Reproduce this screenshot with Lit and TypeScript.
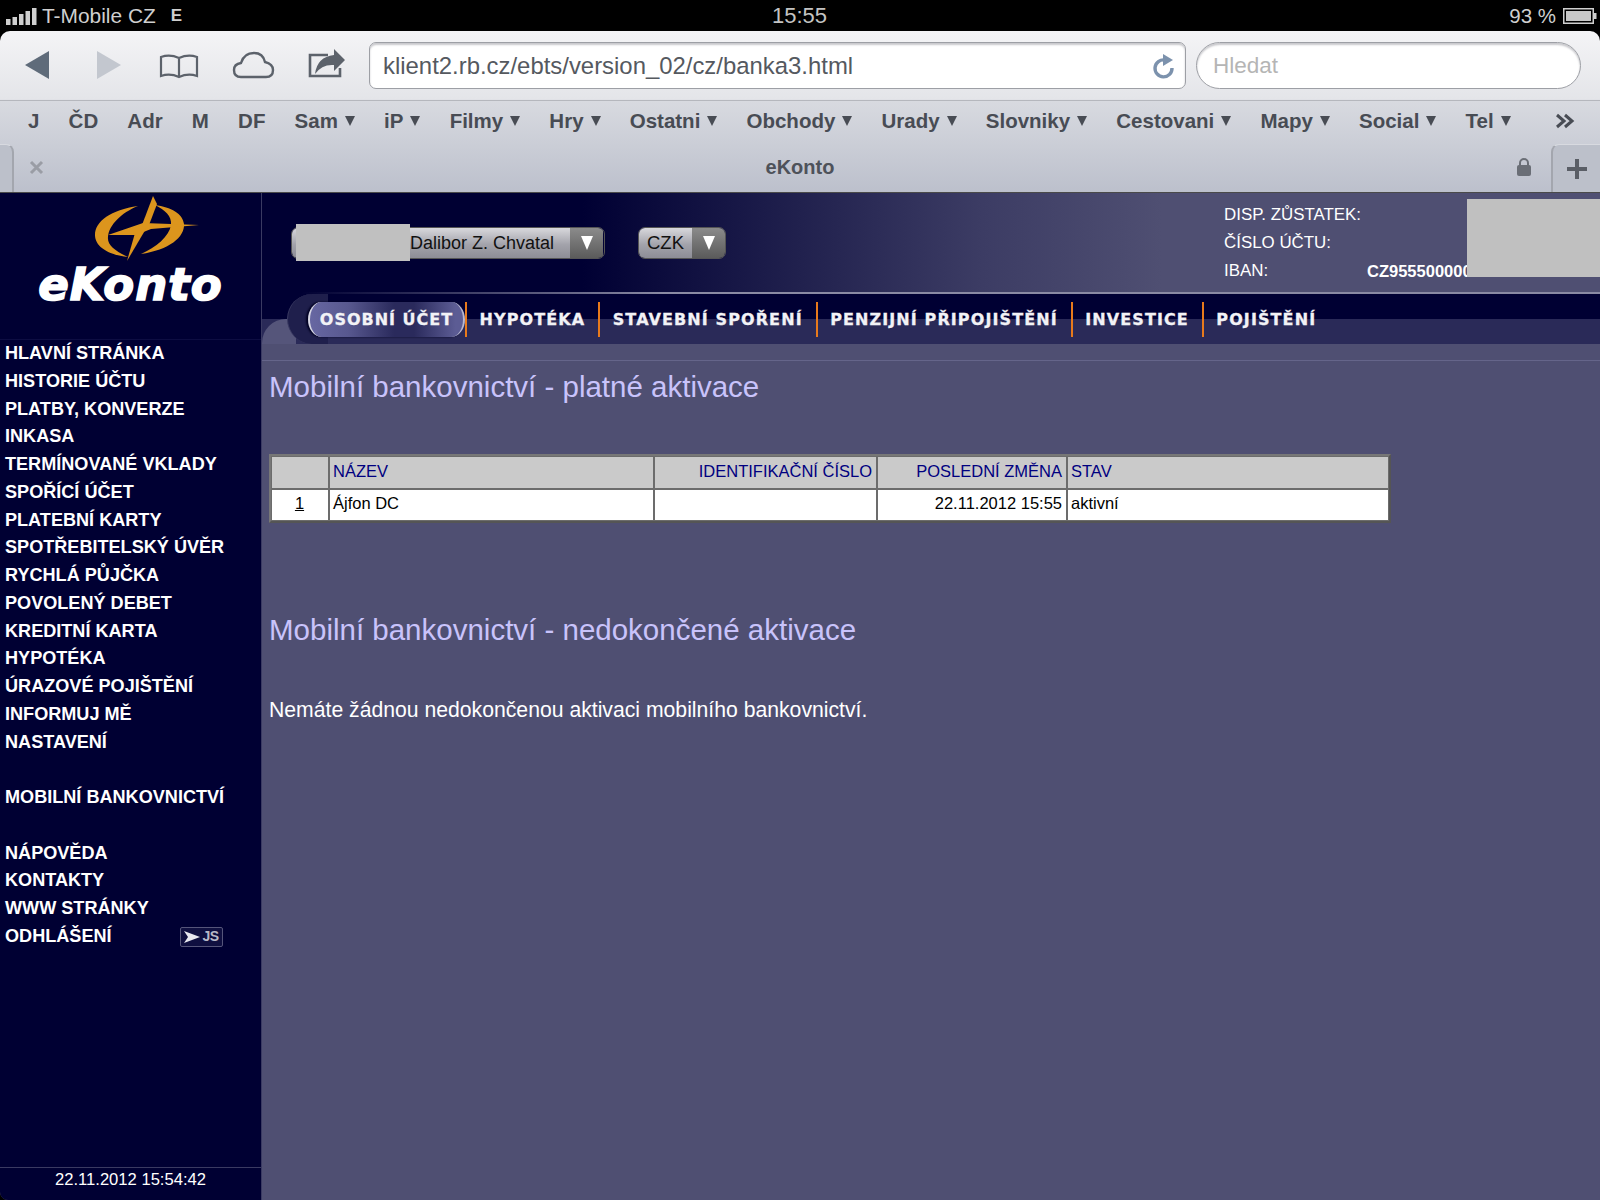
import { LitElement, html, css, svg } from 'lit';
import { customElement } from 'lit/decorators.js';

const bookmarks: [string, boolean][] = [
  ['J', false], ['ČD', false], ['Adr', false], ['M', false], ['DF', false],
  ['Sam', true], ['iP', true], ['Filmy', true], ['Hry', true], ['Ostatni', true],
  ['Obchody', true], ['Urady', true], ['Slovniky', true], ['Cestovani', true],
  ['Mapy', true], ['Social', true], ['Tel', true],
];

const menu = [
  'HLAVNÍ STRÁNKA', 'HISTORIE ÚČTU', 'PLATBY, KONVERZE', 'INKASA', 'TERMÍNOVANÉ VKLADY',
  'SPOŘÍCÍ ÚČET', 'PLATEBNÍ KARTY', 'SPOTŘEBITELSKÝ ÚVĚR', 'RYCHLÁ PŮJČKA', 'POVOLENÝ DEBET',
  'KREDITNÍ KARTA', 'HYPOTÉKA', 'ÚRAZOVÉ POJIŠTĚNÍ', 'INFORMUJ MĚ', 'NASTAVENÍ', '',
  'MOBILNÍ BANKOVNICTVÍ', '', 'NÁPOVĚDA', 'KONTAKTY', 'WWW STRÁNKY',
];

const tabs = ['HYPOTÉKA', 'STAVEBNÍ SPOŘENÍ', 'PENZIJNÍ PŘIPOJIŠTĚNÍ', 'INVESTICE', 'POJIŠTĚNÍ'];

const icons = {
  back: svg`<path d="M25 65 L49 51 V79 Z" fill="#5f6b7a"/>`,
  forward: svg`<path d="M97 51 L121 65 L97 79 Z" fill="#c3c7cf"/>`,
  book: svg`<path d="M161 76 V57 Q170 54 179 58 Q188 54 197 57 V76 Q188 73 179 77 Q170 73 161 76 Z M179 58 V76" fill="none" stroke="#5c626b" stroke-width="2.2"/>`,
  cloud: svg`<path d="M241 77 Q234 77 234 70 Q234 64 241 63 Q244 53 254 53 Q263 53 265 62 Q273 64 273 70 Q273 77 266 77 Z" fill="none" stroke="#5c626b" stroke-width="2.4"/>`,
  share: svg`<path d="M328 55 H310 V76 H340 V68" fill="none" stroke="#5c626b" stroke-width="2.6"/><path d="M334 49 L345 60 L334 71 V65 Q322 64 315 74 Q317 57 334 55 Z" fill="#5c626b"/>`,
};

@customElement('app-root')
export class AppRoot extends LitElement {
  static styles = css`
    :host {
      display: block;
      width: 1600px;
      height: 1200px;
      overflow: hidden;
      background: #000;
      font-family: "Liberation Sans", Arial, sans-serif;
    }
    .status {
      height: 31px;
      display: grid;
      grid-template-columns: 1fr auto 1fr;
      align-items: center;
      color: #cfcfcf;
      font-size: 20.5px;
      padding: 0 3px 0 6px;
    }
    .status-left, .status-right { display: flex; align-items: center; }
    .status-right { justify-content: flex-end; gap: 7px; }
    .carrier { margin-left: 5px; font-size: 20.9px; }
    .net { margin-left: 15px; font-weight: bold; font-size: 17px; }
    .clock { font-size: 22px; color: #c4c4c4; margin-right: 4px; }
    .chrome {
      height: 161px;
      border-radius: 10px 10px 0 0;
      background: linear-gradient(#f4f4f6, #e4e5e9 68px, #d8dae0 70px, #bcc0cc);
      display: flex;
      flex-direction: column;
      border-bottom: 1px solid #4a4a4a;
      box-sizing: content-box;
    }
    .toolbar {
      height: 70px;
      box-sizing: border-box;
      border-bottom: 1px solid #b5b7bd;
      display: flex;
      align-items: center;
      position: relative;
      padding: 0 19px 0 369px;
      gap: 10px;
    }
    .tool-icons { position: absolute; left: 0; top: -31px; width: 370px; height: 100px; }
    .url, .search {
      height: 47px;
      box-sizing: border-box;
      background: #fff;
      border: 1px solid #9d9fa5;
      box-shadow: inset 0 2px 2px #c8c8cc;
      display: flex;
      align-items: center;
      font-size: 22.5px;
    }
    .url {
      width: 817px;
      border-radius: 7px;
      padding: 0 9px 0 13px;
      justify-content: space-between;
      color: #55595f;
      font-size: 23.9px;
    }
    .url span { margin-top: 1px; }
    .search {
      flex: 1;
      border-radius: 24px;
      padding-left: 16px;
      color: #b5b5b5;
    }
    .bookmarks {
      height: 41px;
      box-sizing: border-box;
      display: flex;
      align-items: center;
      justify-content: space-between;
      padding: 0 25px 2px 28px;
      color: #484c54;
      font-weight: bold;
      font-size: 20.5px;
    }
    .bookmarks svg { margin-left: 15px; }
    .mark { display: flex; align-items: center; gap: 7px; white-space: nowrap; }
    .caret {
      width: 0;
      height: 0;
      border-left: 5.5px solid transparent;
      border-right: 5.5px solid transparent;
      border-top: 10px solid #484c54;
    }
    .tabbar {
      flex: 1;
      position: relative;
      display: flex;
      align-items: center;
      justify-content: center;
      font-weight: bold;
      font-size: 20px;
      color: #4e525a;
    }
    .tab-left {
      position: absolute;
      left: 0; top: 2px; bottom: 0;
      width: 12px;
      border-right: 2px solid #a3a6ae;
      border-top: 1px solid #d8dae0;
      border-radius: 0 8px 0 0;
      background: #bcc0ca;
    }
    .close { position: absolute; left: 29px; top: 18px; }
    .lock { position: absolute; left: 1516px; top: 15px; }
    .plus {
      position: absolute;
      left: 1551px; right: 0; top: 2px; bottom: 0;
      border-left: 2px solid #a3a6ae;
      border-top: 1px solid #d8dae0;
      border-radius: 8px 0 0 0;
      background: #bcc0ca;
      display: flex;
      align-items: center;
      justify-content: center;
    }
    .page {
      height: 1007px;
      display: grid;
      grid-template-columns: 262px 1fr;
      background: #4f4f72;
      border-radius: 0 0 0 8px;
      overflow: hidden;
    }
    .side {
      background: #000033;
      border-right: 1px solid #3a3a62;
      display: flex;
      flex-direction: column;
      color: #fff;
      position: relative;
    }
    .logo {
      height: 147px;
      border-bottom: 1px solid #0d0d42;
      display: flex;
      flex-direction: column;
      align-items: center;
      box-sizing: border-box;
      padding-top: 1px;
    }
    .logo svg { display: block; margin-left: 32px; }
    .logo-word {
      font-family: "DejaVu Sans", sans-serif;
      font-weight: bold;
      font-style: italic;
      font-size: 45px;
      line-height: 40px;
      margin-top: 1px;
      letter-spacing: 1px;
      -webkit-text-stroke: 1.6px #fff;
    }
    .menu { flex: 1; padding: 0 0 0 5px; }
    .item {
      height: 27.75px;
      line-height: 27.75px;
      font-weight: bold;
      font-size: 18.1px;
      white-space: nowrap;
      display: flex;
      align-items: center;
      justify-content: space-between;
      width: 218px;
    }
    .js {
      width: 43px;
      height: 20px;
      box-sizing: border-box;
      border: 1px solid #55557a;
      border-radius: 2px;
      background: #0f0f40;
      color: #b9b9c8;
      font-size: 14px;
      letter-spacing: -0.5px;
      display: flex;
      align-items: center;
      justify-content: center;
      gap: 2px;
    }
    .time {
      height: 32px;
      border-top: 1px solid #3a3a62;
      text-align: center;
      font-size: 16.6px;
      line-height: 23px;
    }
    .main { display: flex; flex-direction: column; position: relative; }
    .head {
      height: 101px;
      box-sizing: border-box;
      background: linear-gradient(90deg, #000033 320px, #3c3c64 720px, #4f4f72 900px);
      border-bottom: 2px solid;
      border-image: linear-gradient(90deg, #000033 3%, #8a8aa4 30%) 1;
      position: relative;
      display: flex;
      align-items: center;
      padding: 0 0 0 29px;
      gap: 33px;
      color: #fff;
    }
    .select {
      height: 32px;
      box-sizing: border-box;
      display: flex;
      border-radius: 7px;
      overflow: hidden;
      border: 1px solid #555;
      color: #111;
      font-size: 18px;
    }
    .select-label {
      background: linear-gradient(#d8d8dc, #a3a3ab 55%, #8d8d96);
      display: flex;
      align-items: center;
      padding-top: 1px;
    }
    .select-arrow {
      background: linear-gradient(#8b8b8b, #5b5b5b);
      display: flex;
      align-items: center;
      justify-content: center;
      width: 33px;
    }
    .select-arrow i {
      border-left: 6.5px solid transparent;
      border-right: 6.5px solid transparent;
      border-top: 14px solid #fff;
    }
    .name .select-label { width: 278px; justify-content: flex-end; padding-right: 16px; box-sizing: border-box; }
    .name { width: 314px; }
    .cur .select-label { width: 53px; padding-left: 8px; box-sizing: border-box; font-size: 18.5px; }
    .info {
      position: absolute;
      left: 962px;
      top: 8px;
      display: grid;
      grid-template-columns: 143px auto;
      grid-auto-rows: 28px;
      align-items: center;
      font-size: 16.9px;
    }
    .info b { font-size: 16.5px; }
    .mask { position: absolute; background: #c0c0c0; }
    .mask-name { left: 34px; top: 31px; width: 114px; height: 37px; }
    .mask-acc { left: 1205px; top: 6px; right: 0; height: 78px; }
    .nav {
      height: 50px;
      background: linear-gradient(#000033 25px, #2a2a58 25px);
      position: relative;
      display: flex;
      align-items: center;
      padding-left: 46px;
      color: #f2f2f6;
      font-family: "DejaVu Sans", sans-serif;
      font-weight: bold;
      font-size: 16px;
      letter-spacing: 1.1px;
      -webkit-text-stroke: 0.3px #f2f2f6;
    }
    .nav-corner {
      position: absolute;
      left: 0; top: 25px;
      width: 34px; height: 25px;
      background: #55557a;
      border-radius: 24px 0 0 0;
    }
    .nav-arc {
      position: absolute;
      left: 25px; top: 0; bottom: 0;
      width: 40px;
      background: #1f1f4c;
      border-left: 1px solid #3a3a62;
      border-radius: 26px 0 0 26px;
    }
    .pill {
      position: relative;
      height: 35px;
      width: 157px;
      box-sizing: border-box;
      border-left: 2px solid #d8d8e4;
      border-right: 2px solid #b8b8d0;
      border-radius: 14px / 18px;
      box-shadow: -2px 0 2px #000022;
      background: linear-gradient(90deg, #6767a2, #58588f 25%, #2a2a5c 55%, #2a2a5c 68%, #5c5c94 95%);
      display: flex;
      align-items: center;
      justify-content: center;
      letter-spacing: 1px;
    }
    .sep { border-left: 2px solid #e87a1c; height: 35px; position: relative; display: flex; align-items: center; }
    .sep span { padding: 0 13px 0 12.5px; white-space: nowrap; }
    .rule { height: 10px; border-top: 1px solid #65658a; box-sizing: border-box; margin-top: 16px; }
    .body { padding-left: 7px; }
    h2 {
      margin: 0;
      font-weight: normal;
      font-size: 29.5px;
      line-height: 34px;
      color: #c9c3fb;
    }
    table {
      border-collapse: separate;
      border-spacing: 0;
      border: 2px solid;
      border-color: #777 #555 #555 #777;
      margin: 50px 0 0;
      width: 1122px;
      table-layout: fixed;
      font-size: 16.5px;
      background: #fff;
    }
    th, td {
      border: 1px solid #6c6c6c;
      padding: 0 4px 0 3px;
      box-sizing: border-box;
      font-weight: normal;
      text-align: left;
      white-space: nowrap;
    }
    th { background: #cacaca; color: #000080; height: 33px; padding-bottom: 3px; }
    td { color: #000; height: 32px; padding-bottom: 3px; }
    .r { text-align: right; }
    .c { text-align: center; }
    .h2b { margin-top: 90px; }
    p {
      margin: 51px 0 0;
      color: #fff;
      font-size: 21.2px;
      line-height: 24px;
    }
  `;

  render() {
    return html`
      <div class="status">
        <div class="status-left">
          <svg width="31" height="18" viewBox="0 0 31 18">
            <g fill="#cfcfcf">
              <rect x="0" y="12" width="4.5" height="6"></rect>
              <rect x="6.5" y="10" width="4.5" height="8"></rect>
              <rect x="13" y="7" width="4.5" height="11"></rect>
              <rect x="19.5" y="4" width="4.5" height="14"></rect>
              <rect x="26" y="1" width="4.5" height="17"></rect>
            </g>
          </svg>
          <span class="carrier">T-Mobile CZ</span>
          <span class="net">E</span>
        </div>
        <div class="clock">15:55</div>
        <div class="status-right">
          <span>93 %</span>
          <svg width="34" height="16" viewBox="0 0 34 16">
            <rect x="0.75" y="0.75" width="29.5" height="14.5" fill="none" stroke="#cfcfcf" stroke-width="1.5"></rect>
            <rect x="3" y="3" width="25" height="10" fill="#c8c8c8"></rect>
            <rect x="31" y="5" width="2.5" height="6" fill="#cfcfcf"></rect>
          </svg>
        </div>
      </div>

      <div class="chrome">
        <div class="toolbar">
          <svg class="tool-icons" viewBox="0 0 370 100">
            ${icons.back}${icons.forward}${icons.book}${icons.cloud}${icons.share}
          </svg>
          <div class="url">
            <span>klient2.rb.cz/ebts/version_02/cz/banka3.html</span>
            <svg width="24" height="26" viewBox="0 0 24 26">
              <path d="M20 15 A8.5 8.5 0 1 1 13 7" fill="none" stroke="#7c92ad" stroke-width="3.4"></path>
              <path d="M11 1 L21 7 L11 13 Z" fill="#7c92ad"></path>
            </svg>
          </div>
          <div class="search">Hledat</div>
        </div>

        <div class="bookmarks">
          ${bookmarks.map(([label, more]) => html`
            <span class="mark">${label}${more ? html`<i class="caret"></i>` : ''}</span>
          `)}
          <svg width="20" height="16" viewBox="0 0 20 16">
            <path d="M2 2 L9 8 L2 14 M10 2 L17 8 L10 14" fill="none" stroke="#484c54" stroke-width="3"></path>
          </svg>
        </div>

        <div class="tabbar">
          <div class="tab-left"></div>
          <svg class="close" width="15" height="15" viewBox="0 0 15 15">
            <path d="M2 2 L13 13 M13 2 L2 13" stroke="#9a9da5" stroke-width="3"></path>
          </svg>
          eKonto
          <svg class="lock" width="16" height="20" viewBox="0 0 16 20">
            <path d="M4 9 V6 A4 4 0 0 1 12 6 V9" fill="none" stroke="#6a6e76" stroke-width="2"></path>
            <rect x="1" y="8" width="14" height="11" rx="2" fill="#6a6e76"></rect>
          </svg>
          <div class="plus">
            <svg width="22" height="22" viewBox="0 0 22 22">
              <path d="M11 1 V21 M1 11 H21" stroke="#5a5e66" stroke-width="4"></path>
            </svg>
          </div>
        </div>
      </div>

      <div class="page">
        <aside class="side">
          <div class="logo">
            <svg width="112" height="70" viewBox="90 195 112 70">
              <path d="M137 207 C110 211 94 222 94 236 C94 248 108 256 127 258 C114 252 106 246 107 238 C108 226 120 214 137 207 Z" fill="#dc951d"></path>
              <path d="M140 255 C168 251 184 238 183 225 C182 215 170 208 154 206 C164 211 171 217 170 226 C168 238 155 248 140 255 Z" fill="#dc951d"></path>
              <path d="M107 236 L142 224 L198 226 L150 230 L135 236 Z" fill="#dc951d"></path>
              <path d="M152 197 L156 205 L148 226 L141 226 Z" fill="#dc951d"></path>
              <path d="M134 234 L146 228 L126 262 Z" fill="#dc951d"></path>
            </svg>
            <div class="logo-word">eKonto</div>
          </div>
          <div class="menu">
            ${menu.map((m) => html`<div class="item">${m}</div>`)}
            <div class="item">
              ODHLÁŠENÍ
              <span class="js">
                <svg width="16" height="12" viewBox="0 0 16 12"><path d="M0 0 L16 6 L0 12 L4 6 Z" fill="#e8e8f0"></path></svg>JS
              </span>
            </div>
          </div>
          <div class="time">22.11.2012 15:54:42</div>
        </aside>

        <main class="main">
          <div class="head">
            <div class="select name">
              <div class="select-label">Dalibor Z. Chvatal</div>
              <div class="select-arrow"><i></i></div>
            </div>
            <div class="select cur">
              <div class="select-label">CZK</div>
              <div class="select-arrow"><i></i></div>
            </div>
            <div class="info">
              <span>DISP. ZŮSTATEK:</span><span></span>
              <span>ČÍSLO ÚČTU:</span><span></span>
              <span>IBAN:</span><b>CZ955500000</b>
            </div>
            <div class="mask mask-name"></div>
            <div class="mask mask-acc"></div>
          </div>

          <nav class="nav">
            <div class="nav-corner"></div>
            <div class="nav-arc"></div>
            <div class="pill">OSOBNÍ ÚČET</div>
            ${tabs.map((t) => html`<div class="sep"><span>${t}</span></div>`)}
          </nav>
          <div class="rule"></div>

          <div class="body">
            <h2>Mobilní bankovnictví - platné aktivace</h2>
            <table>
              <colgroup>
                <col style="width:58px" /><col style="width:325px" /><col style="width:223px" />
                <col style="width:190px" /><col />
              </colgroup>
              <tr>
                <th></th>
                <th>NÁZEV</th>
                <th class="r">IDENTIFIKAČNÍ ČÍSLO</th>
                <th class="r">POSLEDNÍ ZMĚNA</th>
                <th>STAV</th>
              </tr>
              <tr>
                <td class="c"><u>1</u></td>
                <td>Ájfon DC</td>
                <td></td>
                <td class="r">22.11.2012 15:55</td>
                <td>aktivní</td>
              </tr>
            </table>
            <h2 class="h2b">Mobilní bankovnictví - nedokončené aktivace</h2>
            <p>Nemáte žádnou nedokončenou aktivaci mobilního bankovnictví.</p>
          </div>
        </main>
      </div>
    `;
  }
}
